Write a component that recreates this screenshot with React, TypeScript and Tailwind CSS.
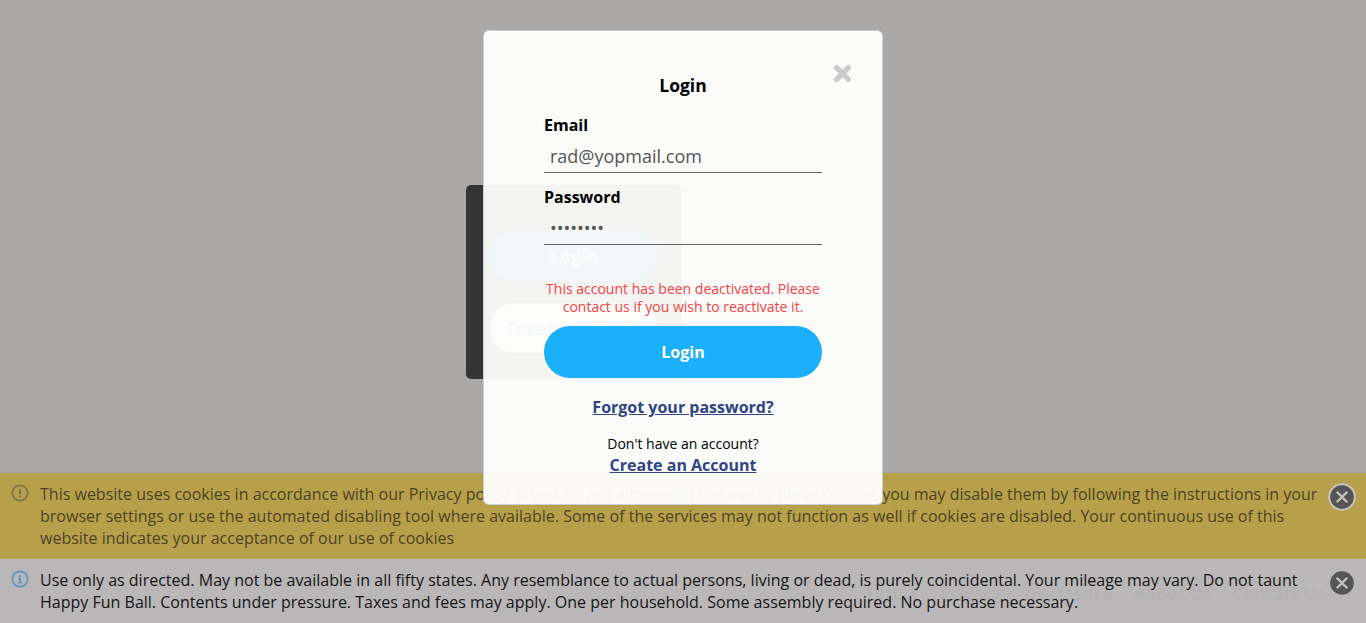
import React from "react";

const cookieLines = [
  "This website uses cookies in accordance with our Privacy policy. If you do not agree with the use of these cookies you may disable them by following the instructions in your",
  "browser settings or use the automated disabling tool where available. Some of the services may not function as well if cookies are disabled. Your continuous use of this",
  "website indicates your acceptance of our use of cookies",
];

const noticeLines = [
  "Use only as directed. May not be available in all fifty states. Any resemblance to actual persons, living or dead, is purely coincidental. Your mileage may vary. Do not taunt",
  "Happy Fun Ball. Contents under pressure. Taxes and fees may apply. One per household. Some assembly required. No purchase necessary.",
];

function CloseCircle({ focused = false }: { focused?: boolean }) {
  return (
    <svg width="28" height="28" viewBox="0 0 28 28" className="block shrink-0">
      {focused && <circle cx="14" cy="14" r="12.7" fill="none" stroke="#c4c2c4" strokeWidth="2.2" />}
      <circle cx="14" cy="14" r="11.8" fill="#555555" />
      <path d="M8.8 8.8l10.4 10.4M19.2 8.8L8.8 19.2" stroke="#c6c5c6" strokeWidth="2.3" />
    </svg>
  );
}

function StatusIcon({ kind }: { kind: "warning" | "info" }) {
  const warning = kind === "warning";
  const color = warning ? "#7d7350" : "#5f93bf";
  return (
    <svg width="18" height="18" viewBox="0 0 18 18" className="block shrink-0">
      <circle cx="9" cy="9" r="7.7" fill="none" stroke={color} strokeWidth="1.7" />
      {warning ? (
        <path d="M9 5v5M9 11.2v2" stroke={color} strokeWidth="2.2" />
      ) : (
        <path d="M9 5v1.9M7.4 8.6H9v4M7.2 12.4h3.8M9 8v4.5" stroke={color} strokeWidth="1.8" fill="none" />
      )}
    </svg>
  );
}

function WelcomePanel() {
  return (
    <div className="absolute left-[466px] top-[185px] flex h-[194px] w-[216px] flex-col items-center gap-[22px] rounded-[5px] bg-[#343436] pt-[46px]">
      <div className="flex h-[50px] w-[170px] items-center justify-center rounded-full bg-[#0070b0] text-[18px] font-bold text-[#c8c8c8]">
        Login
      </div>
      <div className="flex h-[50px] w-[168px] items-center justify-center whitespace-nowrap rounded-full bg-[#c4c4c4] text-[18px] font-bold text-[#3f8fb0]">
        Create Account
      </div>
    </div>
  );
}

function LoginDialog() {
  return (
    <div className="absolute left-[483px] top-[30px] flex h-[475px] w-[400px] flex-col rounded-[6px] border border-[#c8ced9] bg-[#fffffe]/95 px-[60px] text-black">
      <button className="absolute right-[30px] top-[33px]" aria-label="Close">
        <svg width="19" height="19" viewBox="0 0 19 19" className="block">
          <path d="M3.7 3.7l11.6 11.6M15.3 3.7L3.7 15.3" stroke="#cbcbcb" strokeWidth="5.4" strokeLinecap="round" />
        </svg>
      </button>
      <h1 className="mt-[42px] text-center text-[17.5px] font-bold leading-[24px]">Login</h1>
      <label className="mt-[17px] text-[16px] font-bold leading-[22px]">Email</label>
      <input
        type="text"
        readOnly
        value="rad@yopmail.com"
        className="mt-[4px] h-[33px] border-b border-[#666] bg-transparent px-[6px] text-[18px] text-[#555] outline-none"
      />
      <label className="mt-[13px] text-[16px] font-bold leading-[22px]">Password</label>
      <input
        type="password"
        readOnly
        value="password"
        className="mt-[4px] h-[33px] border-b border-[#666] bg-transparent px-[6px] text-[18px] text-[#555] outline-none"
      />
      <p className="mt-[35px] whitespace-nowrap text-center text-[14px] leading-[18px] text-[#f44343]">
        This account has been deactivated. Please
        <br />
        contact us if you wish to reactivate it.
      </p>
      <button className="mt-[10px] h-[52px] shrink-0 rounded-full bg-[#1bb0f9] text-[16px] font-bold text-white">
        Login
      </button>
      <a className="mt-[18px] text-center text-[16px] font-bold leading-[22px] text-[#2f4583] underline">
        Forgot your password?
      </a>
      <p className="mt-[16px] text-center text-[14px] leading-[19px]">Don't have an account?</p>
      <a className="mt-[1px] text-center text-[16px] font-bold leading-[22px] text-[#2f4583] underline">
        Create an Account
      </a>
    </div>
  );
}

export default function App() {
  return (
    <div className="relative flex h-[623px] w-full flex-col justify-end overflow-hidden bg-[#a9a8a6] font-['Open_Sans',sans-serif] text-[16px]">
      <WelcomePanel />
      <div className="flex h-[86px] items-start bg-[#b8a04a] pl-[11px] pt-[10px] text-[#4b4325]">
        <div className="pt-[1px]">
          <StatusIcon kind="warning" />
        </div>
        <div className="ml-[11px] grow whitespace-nowrap leading-[22px] tracking-[0.006px]">
          {cookieLines.map((line) => (
            <div key={line}>{line}</div>
          ))}
        </div>
        <div className="mr-[10px]">
          <CloseCircle focused />
        </div>
      </div>
      <div className="relative flex h-[64px] items-start bg-[#b9b7b8] pl-[11px] pt-[10px] text-[#151515]">
        <div className="absolute right-[41px] top-[24px] flex gap-[22px] whitespace-nowrap text-[17px] font-bold leading-[22px] text-[#b5b3b4]">
          <span>Terms</span>
          <span>Privacy</span>
          <span>Disclosure</span>
          <span>About Us</span>
          <span>Contact Us</span>
        </div>
        <div className="relative pt-[1px]">
          <StatusIcon kind="info" />
        </div>
        <div className="relative ml-[11px] grow whitespace-nowrap leading-[22px] tracking-[0.006px]">
          {noticeLines.map((line) => (
            <div key={line}>{line}</div>
          ))}
        </div>
        <div className="relative mr-[10px]">
          <CloseCircle />
        </div>
      </div>
      <LoginDialog />
    </div>
  );
}
